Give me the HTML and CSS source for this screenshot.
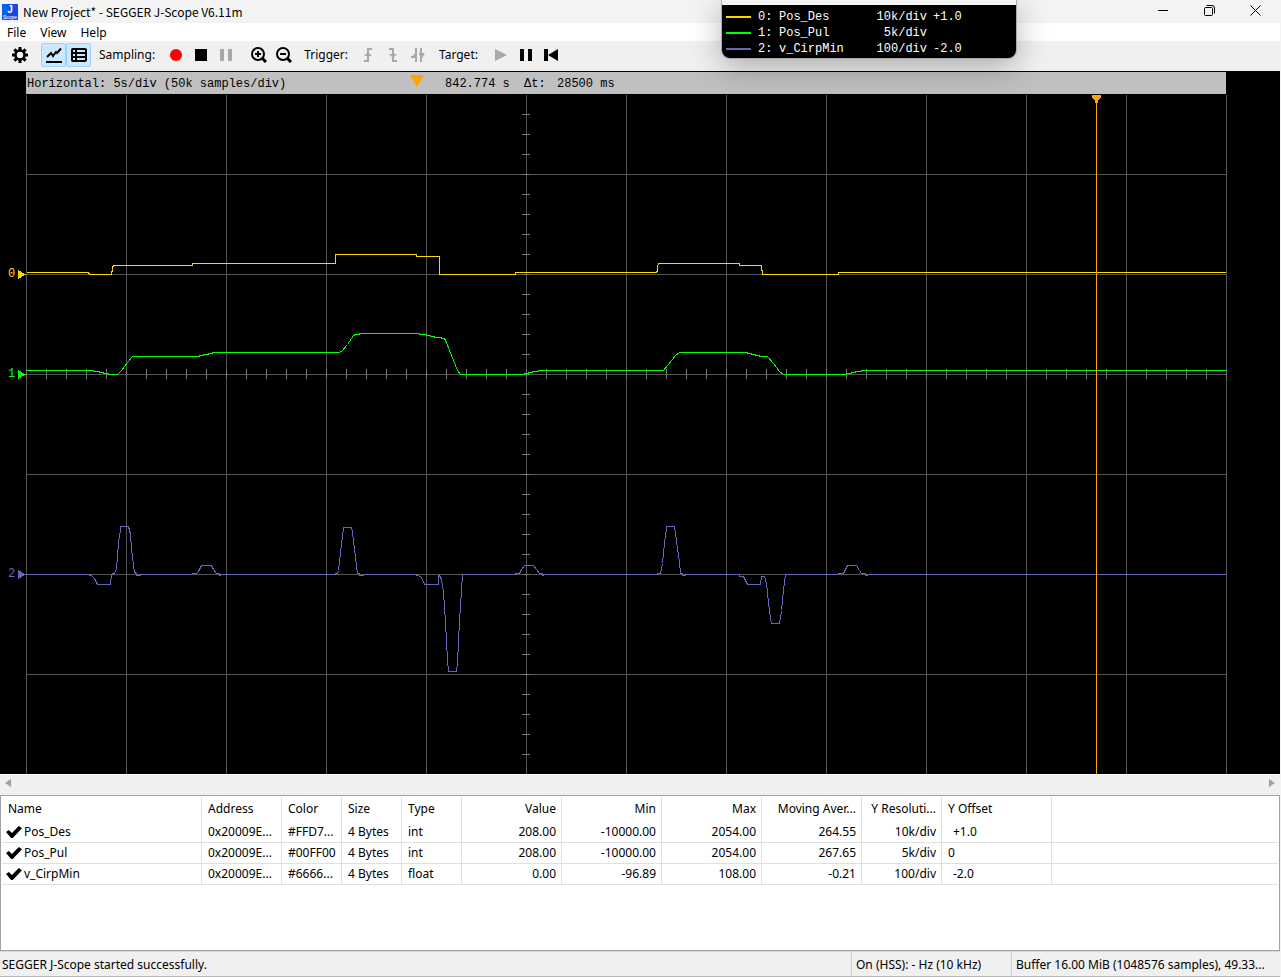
FILE: index.html
```html
<!DOCTYPE html>
<html lang="en">

<head>
    <meta charset="UTF-8">
    <meta name="viewport" content="width=device-width, initial-scale=1.0">
    <title>New Project* - SEGGER J-Scope V6.11m</title>
    <link rel="stylesheet" href="styles.css">
</head>

<body>
    <header class="titlebar">
        <svg class="logo" width="16" height="16" viewBox="0 0 16 16">
            <rect width="16" height="16" fill="#1a48e8"/>
            <path d="M0 0h5v16H0z" fill="#0a62f0"/>
            <text x="8" y="9" class="logo-letter">J</text>
            <text x="8" y="15" class="logo-name">Scope</text>
        </svg>
        <h1>New Project* - SEGGER J-Scope V6.11m</h1>
        <div class="window-controls">
            <button type="button" aria-label="Minimize">
                <svg width="10" height="10"><path d="M0 5.5h10" stroke="#000"/></svg>
            </button>
            <button type="button" aria-label="Restore">
                <svg width="11" height="11" fill="none" stroke="#000">
                    <rect x=".5" y="2.5" width="8" height="8" rx="1"/>
                    <path d="M2.5 .5H8a2.5 2.5 0 0 1 2.5 2.5v5.500"/>
                </svg>
            </button>
            <button type="button" aria-label="Close">
                <svg width="11" height="11"><path d="M.5 .5l10 10M10.500 .5l-10 10" stroke="#000"/></svg>
            </button>
        </div>
    </header>

    <nav class="menu">
        <button type="button">File</button>
        <button type="button">View</button>
        <button type="button">Help</button>
    </nav>

    <div class="toolbar">
        <div class="group settings">
            <button type="button" aria-label="Settings">
                <svg width="16" height="16" viewBox="-8 -8 16 16">
                    <circle r="4.500" fill="none" stroke="#000" stroke-width="2.500"/>
                    <path d="M0-8v3M0 5v3M-8 0h3M5 0h3M-5.600-5.600l2 2M3.600 3.600l2 2M-5.600 5.600l2-2M3.600-3.600l2-2" stroke="#000" stroke-width="3"/>
                </svg>
            </button>
        </div>
        <div class="group">
            <button type="button" class="active" aria-label="Show graph">
                <svg width="16" height="16" fill="none" stroke="#000">
                    <path d="M1 10l4-4 2 3 3-4 1 1 4-4.500" stroke-width="2"/>
                    <path d="M0 15h16" stroke-width="2"/>
                </svg>
            </button>
            <button type="button" class="active" aria-label="Show list">
                <svg width="16" height="14" fill="none" stroke="#000" stroke-width="2">
                    <rect x="1" y="1" width="14" height="12" rx="1"/>
                    <path d="M1 5h14M1 9h14M5 1v12"/>
                </svg>
            </button>
        </div>
        <div class="group">
            <span class="label">Sampling:</span>
            <button type="button" aria-label="Start sampling">
                <svg width="12" height="12"><circle cx="6" cy="6" r="6" fill="#f00"/></svg>
            </button>
            <button type="button" aria-label="Stop sampling">
                <svg width="12" height="12"><rect width="12" height="12"/></svg>
            </button>
            <button type="button" aria-label="Pause sampling" disabled>
                <svg width="12" height="12"><path d="M0 0h4v12H0zM8 0h4v12H8z" fill="#a8a8a8"/></svg>
            </button>
        </div>
        <div class="group">
            <button type="button" aria-label="Zoom in">
                <svg width="16" height="16" fill="none" stroke="#000" stroke-width="2">
                    <circle cx="7" cy="7" r="6"/>
                    <path d="M4 7h6M7 4v6"/>
                    <path d="M11 11l4 4" stroke-width="3"/>
                </svg>
            </button>
            <button type="button" aria-label="Zoom out">
                <svg width="16" height="16" fill="none" stroke="#000" stroke-width="2">
                    <circle cx="7" cy="7" r="6"/>
                    <path d="M4 7h6"/>
                    <path d="M11 11l4 4" stroke-width="3"/>
                </svg>
            </button>
        </div>
        <div class="group">
            <span class="label">Trigger:</span>
            <button type="button" aria-label="Rising edge" disabled>
                <svg width="8" height="14" fill="none" stroke="#a8a8a8" stroke-width="2">
                    <path d="M0 13h4V1h4"/>
                    <path d="M0 8l4-4 4 4z" fill="#a8a8a8" stroke="none"/>
                </svg>
            </button>
            <button type="button" aria-label="Falling edge" disabled>
                <svg width="8" height="14" fill="none" stroke="#a8a8a8" stroke-width="2">
                    <path d="M0 1h4v12h4"/>
                    <path d="M0 6l4 4 4-4z" fill="#a8a8a8" stroke="none"/>
                </svg>
            </button>
            <button type="button" aria-label="Both edges" disabled>
                <svg width="14" height="14" fill="none" stroke="#a8a8a8" stroke-width="2">
                    <path d="M5 0v14M10 0v14M0 9h6M8 6h5"/>
                    <path d="M1 9l4-5v5zM10 11V6h4z" fill="#a8a8a8" stroke="none"/>
                </svg>
            </button>
        </div>
        <div class="group">
            <span class="label">Target:</span>
            <button type="button" aria-label="Run target" disabled>
                <svg width="12" height="12"><path d="M0 0l12 6-12 6z" fill="#a8a8a8"/></svg>
            </button>
            <button type="button" aria-label="Halt target">
                <svg width="12" height="12"><path d="M0 0h4v12H0zM8 0h4v12H8z"/></svg>
            </button>
            <button type="button" aria-label="Reset target">
                <svg width="14" height="12"><path d="M0 0h4v12H0zM14 0v12L4 6z"/></svg>
            </button>
        </div>
    </div>

    <main class="scope">
        <div class="timebar">
            <span class="scale">Horizontal: 5s/div (50k samples/div)</span>
            <svg class="pointer" width="14" height="12"><path d="M0 0h14L7 12z" fill="#ffa500"/></svg>
            <span class="time">842.774 s</span>
            <span class="delta">Δt:</span>
            <span>28500 ms</span>
        </div>

        <svg class="plot" viewBox="0 95 1280 679">
            <g transform="translate(.5 .5)" fill="none">
                <!-- grid -->
                <path class="grid" d="M26 174H1226M26 274H1226M26 374H1226M26 474H1226M26 574H1226M26 674H1226"/>
                <path class="grid" d="M26 94V774M126 94V774M226 94V774M326 94V774M426 94V774M526 94V774M626 94V774M726 94V774M826 94V774M926 94V774M1026 94V774M1126 94V774M1226 94V774"/>
                <!-- ticks on the two middle axes -->
                <path class="ticks" stroke-width="10" d="M25.500 373.500H1227"/>
                <path class="ticks" stroke-width="8" d="M525.500 113.500V774"/>

                <!-- Pos_Des -->
                <path class="trace yellow" d="M26 272H88V273H89V274H111V272L112 270V267L113 265H192V263H335V254H416V256H439V274H515V272H656L657 270V266L658 263H739V265H761V270H762V274H838V272H1225"/>
                <!-- Pos_Pul -->
                <path class="trace green" d="M26 370H93V371H99V372H103V373H108V374H117L121 370L127 362L132 356H199V355H203V354H208V353H212V352H339L342 350L347 344L353 335L355 334H359V333H419V334H426V335H430V336H434V337H441V338H444L446 342L449 350L453 360L457 370L460 374H524V373H528V372H532V371H538V370H663L668 364L675 355L679 352H747V353H751V354H755V355H759V356H767L773 363L779 371L783 374H846V373H851V372H855V371H861V370H1225"/>
                <!-- v_CirpMin -->
                <path class="trace blue" d="M26 574H89V575H91L94 578L97 584H110L111 574H112V573H114L116 568L117 556L118 542L120 530V526H128L130 534L131 548L133 564L134 572L136 573V575H140V574H192V573H196L198 571L201 565H211L213 569L216 573H219V575H220V574H335V573H337L338 570L340 552L342 536L343 527H351L352 532L354 548L356 566L357 573H359V575H363V574H416V575H418L421 577L424 584H438V575H439L441 579L443 592L445 622L447 660L448 671H456L457 662L459 620L461 590L462 574H515V573H519L521 569L524 565H533L536 569L539 573H542V575H543V574H657V573H660L662 563L664 542L666 528V526H674L675 532L677 548L679 562L680 573H682V575H685V574H739V576H743L747 584H760L761 576H764L766 583L768 602L770 618L771 623H779L781 610L783 589L785 574H838V573H843L847 565H856L859 570L861 573H865V575H867V574H1225"/>

                <path d="M1096 95V774" stroke="#ffa500"/>
            </g>
            <path d="M1092 95h9v2l-3 4v2h-3v-2l-3-4z" fill="#ffa500"/>

            <g class="marker yellow">
                <text x="8" y="277">0</text>
                <path d="M18 270l8 4.500-8 4.500z"/>
            </g>
            <g class="marker green">
                <text x="8" y="377">1</text>
                <path d="M18 370l8 4.500-8 4.500z"/>
            </g>
            <g class="marker blue">
                <text x="8" y="577">2</text>
                <path d="M18 570l8 4.500-8 4.500z"/>
            </g>
        </svg>
    </main>

    <div class="scrollbar">
        <button type="button" aria-label="Scroll left">
            <svg width="6" height="8"><path d="M6 0v8L0 4z" fill="#a0a0a0"/></svg>
        </button>
        <button type="button" aria-label="Scroll right">
            <svg width="6" height="8"><path d="M0 0v8l6-4z" fill="#a0a0a0"/></svg>
        </button>
    </div>

    <section class="symbols">
        <table>
            <colgroup>
                <col class="col-name">
                <col class="col-address">
                <col class="col-small">
                <col class="col-small">
                <col class="col-small">
                <col class="col-number">
                <col class="col-number">
                <col class="col-number">
                <col class="col-number">
                <col class="col-address">
                <col class="col-offset">
                <col>
            </colgroup>
            <thead>
                <tr>
                    <th>Name</th>
                    <th>Address</th>
                    <th>Color</th>
                    <th>Size</th>
                    <th>Type</th>
                    <th class="num">Value</th>
                    <th class="num">Min</th>
                    <th class="num">Max</th>
                    <th class="num">Moving Aver...</th>
                    <th class="num">Y Resoluti...</th>
                    <th>Y Offset</th>
                    <td></td>
                </tr>
            </thead>
            <tbody>
                <tr>
                    <td><label><input type="checkbox" checked>Pos_Des</label></td>
                    <td>0x20009E...</td>
                    <td>#FFD7...</td>
                    <td>4 Bytes</td>
                    <td>int</td>
                    <td class="num">208.00</td>
                    <td class="num">-10000.00</td>
                    <td class="num">2054.00</td>
                    <td class="num">264.55</td>
                    <td class="num">10k/div</td>
                    <td class="signed">+1.0</td>
                    <td></td>
                </tr>
                <tr>
                    <td><label><input type="checkbox" checked>Pos_Pul</label></td>
                    <td>0x20009E...</td>
                    <td>#00FF00</td>
                    <td>4 Bytes</td>
                    <td>int</td>
                    <td class="num">208.00</td>
                    <td class="num">-10000.00</td>
                    <td class="num">2054.00</td>
                    <td class="num">267.65</td>
                    <td class="num">5k/div</td>
                    <td>0</td>
                    <td></td>
                </tr>
                <tr>
                    <td><label><input type="checkbox" checked>v_CirpMin</label></td>
                    <td>0x20009E...</td>
                    <td>#6666...</td>
                    <td>4 Bytes</td>
                    <td>float</td>
                    <td class="num">0.00</td>
                    <td class="num">-96.89</td>
                    <td class="num">108.00</td>
                    <td class="num">-0.21</td>
                    <td class="num">100/div</td>
                    <td class="signed">-2.0</td>
                    <td></td>
                </tr>
            </tbody>
        </table>
    </section>

    <footer class="statusbar">
        <span class="message">SEGGER J-Scope started successfully.</span>
        <span class="rate">On (HSS): - Hz (10 kHz)</span>
        <span class="buffer">Buffer 16.00 MiB (1048576 samples), 49.33...</span>
    </footer>

    <!-- floating legend window -->
    <aside class="legend">
        <div class="legend-row">
            <i class="swatch yellow"></i><span>0:</span><span>Pos_Des</span><span class="div">10k/div</span><span>+1.0</span>
        </div>
        <div class="legend-row">
            <i class="swatch green"></i><span>1:</span><span>Pos_Pul</span><span class="div">5k/div</span>
        </div>
        <div class="legend-row">
            <i class="swatch blue"></i><span>2:</span><span>v_CirpMin</span><span class="div">100/div</span><span>-2.0</span>
        </div>
    </aside>
</body>

</html>
```

FILE: styles.css
```css
* {
    box-sizing: border-box;
}

body {
    display: flex;
    flex-direction: column;
    position: relative;
    min-height: 100vh;
    margin: 0;
    border-right: 1px solid #f3f3f3;
    background-color: #f0f0f0;
    color: #000;
    font-family: "Noto Sans", "Open Sans", sans-serif;
    font-size: 12px;
    line-height: 16px;
}

button {
    display: flex;
    align-items: center;
    justify-content: center;
    margin: 0;
    padding: 0;
    border: 1px solid transparent;
    background: none;
    color: inherit;
    font: inherit;
}

/* title bar */
.titlebar {
    display: flex;
    align-items: center;
    height: 23px;
    padding: 0 2px;
    background-color: #f3f3f3;
}

.titlebar h1 {
    margin: 0 0 0 5px;
    font-family: "Noto Sans CJK SC", "Noto Sans", sans-serif;
    font-size: 12px;
    font-weight: normal;
}

.logo text {
    fill: #fff;
    font-family: "Liberation Sans", sans-serif;
    text-anchor: middle;
}

.logo .logo-letter {
    font-size: 10px;
    font-weight: bold;
}

.logo .logo-name {
    font-size: 5px;
}

.window-controls {
    display: flex;
    align-self: flex-start;
    margin-left: auto;
}

.window-controls button {
    width: 46px;
    height: 20px;
}

/* menu */
.menu {
    display: flex;
    height: 18px;
    background-color: #fff;
}

.menu button {
    padding: 2px 6px 0;
}

/* toolbar */
.toolbar {
    display: flex;
    align-items: center;
    gap: 8px;
    height: 30px;
    padding: 0 7px 2px;
}

.group {
    display: flex;
    align-items: center;
}

.group button {
    width: 25px;
    height: 24px;
    border-radius: 2px;
}

.group button.active {
    border-color: #99d1ff;
    background-color: #cce8ff;
}

.settings {
    width: 26px;
}

.label {
    min-width: 42px;
    margin-right: 8px;
}

/* scope */
.scope {
    padding-top: 1px;
    background-color: #000;
}

.timebar {
    display: flex;
    align-items: center;
    height: 22px;
    margin: 0 54px 1px 26px;
    padding: 2px 0 0 1px;
    background-color: #c0c0c0;
    font-family: "Liberation Mono", monospace;
    font-size: 12px;
    white-space: nowrap;
}

.scale {
    width: 383px;
}

.pointer {
    margin: 0 21px 6px 0;
}

.time {
    width: 79px;
}

.delta {
    width: 33px;
}

.plot {
    display: block;
    width: 100%;
    shape-rendering: crispEdges;
}

.grid {
    stroke: #555;
}

.ticks {
    stroke: #777;
    stroke-dasharray: 1 19;
}

.yellow {
    color: #ffd700;
}

.green {
    color: #0f0;
}

.blue {
    color: #66b;
}

.trace {
    stroke: currentColor;
}

.marker {
    fill: currentColor;
    font-family: "Liberation Mono", monospace;
    font-size: 12px;
}

/* scrollbar */
.scrollbar {
    display: flex;
    justify-content: space-between;
    height: 21px;
    border-top: 1px solid #fff;
}

.scrollbar button {
    width: 16px;
    height: 16px;
}

/* symbol table */
.symbols {
    flex: 1;
    padding: 1px;
    border: 1px solid #a0a0a6;
    background-color: #fff;
}

.symbols table {
    width: 100%;
    border-collapse: separate;
    border-spacing: 0;
    table-layout: fixed;
}

.col-name {
    width: 200px;
}

.col-address {
    width: 80px;
}

.col-small {
    width: 60px;
}

.col-number {
    width: 100px;
}

.col-offset {
    width: 110px;
}

.symbols th,
.symbols td {
    height: 21px;
    padding: 0 5px 0 6px;
    border-right: 1px solid #e0e0e0;
    border-bottom: 1px solid #e0e0e0;
    font-weight: normal;
    text-align: left;
    white-space: nowrap;
}

.symbols thead th,
.symbols thead td {
    height: 25px;
    padding-bottom: 2px;
    border-bottom: none;
}

.symbols td:last-child {
    border-right: none;
}

.symbols .num {
    padding-left: 0;
    text-align: right;
}

.symbols .signed {
    padding-left: 11px;
}

.symbols label {
    display: flex;
    align-items: center;
    gap: 2px;
    margin-left: -2px;
}

.symbols input {
    appearance: none;
    width: 16px;
    height: 12px;
    margin: 0;
}

.symbols input:checked {
    background-color: #000;
    clip-path: polygon(0 50%, 18% 33%, 37% 58%, 80% 0, 100% 18%, 42% 100%, 32% 100%);
}

/* status bar */
.statusbar {
    display: flex;
    align-items: center;
    height: 26px;
    border-top: 1px solid #d8d8d8;
    border-bottom: 1px solid #b8b8b8;
    white-space: nowrap;
}

.statusbar span {
    padding: 5px 0 3px 4px;
    border-left: 1px solid #d0d0d0;
}

.statusbar .message {
    flex: 1;
    padding-left: 2px;
    border-left: none;
}

.rate {
    width: 160px;
}

.buffer {
    width: 269px;
}

/* legend */
.legend {
    position: absolute;
    top: 0;
    right: 264px;
    width: 294px;
    padding: 4px 4px 1px;
    border-top: 5px solid #f3f3f3;
    border-radius: 0 0 8px 8px;
    background-color: #000;
    box-shadow: 0 0 0 1px #aaa, 0 8px 32px rgba(0, 0, 0, 0.3);
    color: #fff;
    font-family: "Liberation Mono", monospace;
    font-size: 12px;
}

.legend-row {
    display: grid;
    grid-template-columns: 32px 21px 94px 60px 1fr;
    align-items: center;
    height: 16px;
}

.legend .div {
    padding-right: 6px;
    text-align: right;
}

.swatch {
    width: 25px;
    height: 2px;
    background-color: currentColor;
}
```
